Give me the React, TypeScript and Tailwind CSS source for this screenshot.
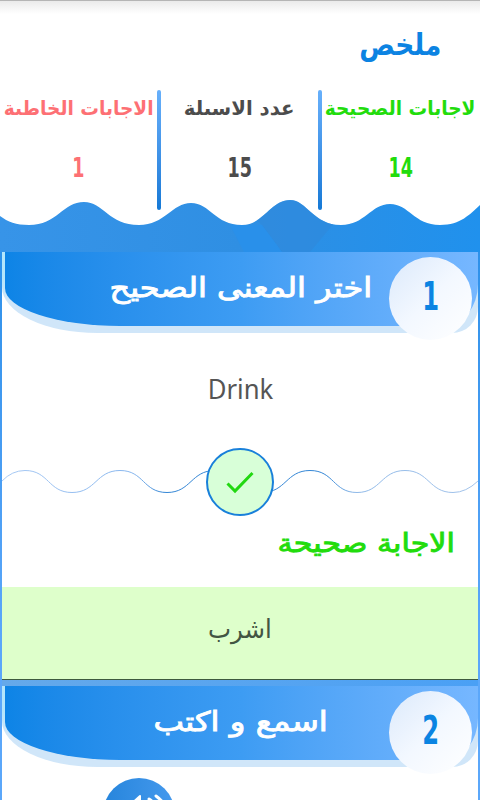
import type { ReactNode } from "react";

const ar = "font-['DejaVu_Sans',sans-serif]";

function Stat({ label, value, color, fit }: { label: string; value: string; color: string; fit: string }) {
  return (
    <div className={`flex min-w-0 flex-1 flex-col items-center ${color}`}>
      <div className={`mt-[4px] flex h-7 items-center whitespace-nowrap text-[20px] font-bold ${ar} ${fit}`}>{label}</div>
      <div className={`mt-[28px] flex h-9 scale-x-[0.65] items-center text-[27px] font-bold ${ar}`}>{value}</div>
    </div>
  );
}

function Divider() {
  return <div className="h-[120px] w-1 shrink-0 rounded-full bg-linear-to-b from-[#67b0fb] to-[#1379d6]" />;
}

function CardHeader({ n, title, fit }: { n: string; title: string; fit: string }) {
  return (
    <div className="relative h-[81px] rounded-[0_0_26px_95px/0_0_26px_46px] bg-linear-to-b from-[#b4e6fb] from-30% to-[#d0e6f9] to-60% pl-[3px]">
      <div className="flex h-[74px] items-center justify-center rounded-[0_0_34px_115px/0_0_42px_38px] bg-linear-to-r from-[#0d84e6] via-[#3d9cf3] to-[#76b7ff] pb-[3px]">
        <span dir="rtl" className={`-ml-[2px] whitespace-nowrap text-[27px] leading-[40px] text-white [-webkit-text-stroke:0.9px] ${ar} ${fit}`}>{title}</span>
      </div>
      <div className="absolute left-[387px] top-[5px] flex size-[83px] items-center justify-center rounded-full bg-linear-to-tl from-white via-[#f3f8ff] to-[#dbe9fb] pb-[3px]">
        <span className={`scale-x-[0.62] text-[39px] font-bold text-[#0b84e2] ${ar}`}>{n}</span>
      </div>
    </div>
  );
}

function Card({ children, className }: { children: ReactNode; className: string }) {
  return <section className={`mx-[2px] bg-white ${className}`}>{children}</section>;
}

export default function App() {
  return (
    <main className="h-[800px] w-[480px] overflow-hidden bg-linear-to-b from-[#2b90e9] from-30% to-[#5ba7fa] to-80%">
      <header className="relative h-[252px] bg-white">
        <div className="absolute inset-x-0 top-0 h-[14px] bg-linear-to-b from-[#e9e9e9] to-white" />
        <div className="absolute inset-x-0 top-0 h-px bg-[#b5b5b5]" />
        <svg className="absolute left-0 top-[196px]" width="480" height="56" viewBox="0 0 480 56">
          <defs>
            <linearGradient id="sea" x1="0" x2="1">
              <stop offset="0" stopColor="#3794e8" />
              <stop offset=".5" stopColor="#2f8fe3" />
              <stop offset="1" stopColor="#2091ed" />
            </linearGradient>
            <clipPath id="waves">
              <path d="M0 20C8 26 16 29 29 29C57 29 63 6 84 6C103 6 109 29 139 29C165 29 172 7 191 7C210 7 215 29 242 29C263 29 271 4 290 4C307 4 313 29 341 29C365 29 371 8 390 8C409 8 414 29 440 29C461 29 470 18 480 9V56H0Z" />
            </clipPath>
          </defs>
          <g clipPath="url(#waves)">
            <path fill="url(#sea)" d="M0 0h480v56H0z" />
            <path d="M230 0h110v20L310 56h-28L262 29z" fill="#3088db" opacity=".6" />
            <path d="M230 29l14 27h38L262 29z" fill="#2791ee" opacity=".6" />
          </g>
        </svg>
        <div className="relative flex h-[90px] items-center justify-end pb-[2px] pr-[39px]">
          <h1 className={`origin-right text-[30px] font-bold text-[#0c83e2] ${ar} scale-x-[0.88]`}>ملخص</h1>
        </div>
        <div className="relative flex pr-[1px]">
          <Stat label="الاجابات الخاطىة" value="1" color="text-[#fd7074]" fit="scale-x-[0.93]" />
          <Divider />
          <Stat label="عدد الاسىلة" value="15" color="text-[#4c4c4c]" fit="scale-x-[0.985]" />
          <Divider />
          <Stat label="لاجابات الصحيحة" value="14" color="text-[#22dc0c]" fit="scale-x-[0.93]" />
        </div>
      </header>

      <Card className="h-[428px]">
        <CardHeader n="1" title="اختر المعنى الصحيح" fit="scale-x-[1.185]" />
        <div className="flex h-[111px] items-center justify-center pt-[1px] font-['Noto_Sans',sans-serif] text-[27px] text-[#555]">
          <span className="scale-x-[0.95]">Drink</span>
        </div>
        <div className="relative h-[76px]">
          <svg width="476" height="76" viewBox="2 444 476 76" fill="none">
            <defs>
              <linearGradient id="line" gradientUnits="userSpaceOnUse" x1="0" x2="480" y1="0" y2="0">
                <stop offset="0" stopColor="#a9caf4" />
                <stop offset=".28" stopColor="#86b5ed" />
                <stop offset=".34" stopColor="#3486d5" />
                <stop offset=".68" stopColor="#3486d5" />
                <stop offset=".74" stopColor="#8fb9e8" />
                <stop offset="1" stopColor="#a3c3ea" />
              </linearGradient>
            </defs>
            <path stroke="url(#line)" d="M2 481Q12 470.500 25 470.500C49 470.500 48 492.500 72 492.500S96 470.500 120 470.500S143 492.500 167 492.500S191 470.500 215 470.500S238 492.500 262 492.500S286 470.500 310 470.500S333 492.500 357 492.500S381 470.500 405 470.500S429 492.500 453 492.500Q466 492.500 478 481" />
            <circle cx="240" cy="482" r="33" fill="#d8ffd8" stroke="#1980da" strokeWidth="2" />
            <path d="M227.500 483.500L235 491L252.500 473" stroke="#22d812" strokeWidth="3" />
          </svg>
        </div>
        <div className="flex h-[67px] items-center justify-end pb-[21px] pr-[23px]">
          <span dir="rtl" className={`origin-right whitespace-nowrap text-[26px] text-[#22dc0c] [-webkit-text-stroke:0.9px] ${ar} scale-x-[1.16]`}>الاجابة صحيحة</span>
        </div>
        <div className="flex h-[93px] items-center justify-center border-b border-[#3e5a3e] bg-[#deffcb] pb-[8px]">
          <span className={`text-[26px] text-[#425542] ${ar} scale-x-[0.94]`}>اشرب</span>
        </div>
      </Card>

      <div className="mx-[2px] h-[6px] bg-linear-to-r from-[#65a9ea] to-[#4aa0f5]" />

      <Card className="h-[120px]">
        <CardHeader n="2" title="اسمع و اكتب" fit="scale-x-[1.2]" />
        <div className="pl-[100px] pt-[10px]">
          <svg width="74" height="74" viewBox="0 0 74 74" fill="none">
            <defs>
              <linearGradient id="speaker" x1="0" x2="1">
                <stop stopColor="#2685dc" />
                <stop offset="1" stopColor="#4599ed" />
              </linearGradient>
            </defs>
            <circle cx="37" cy="37" r="36" fill="url(#speaker)" />
            <path d="M38 19v36L27 45H18V29h9z" fill="white" stroke="white" strokeWidth="2" strokeLinejoin="round" />
            <path d="M47 22q9 6 9 15t-9 15M54 19q11 8 11 18t-11 18" stroke="white" strokeWidth="3" strokeLinecap="round" />
          </svg>
        </div>
      </Card>
    </main>
  );
}
